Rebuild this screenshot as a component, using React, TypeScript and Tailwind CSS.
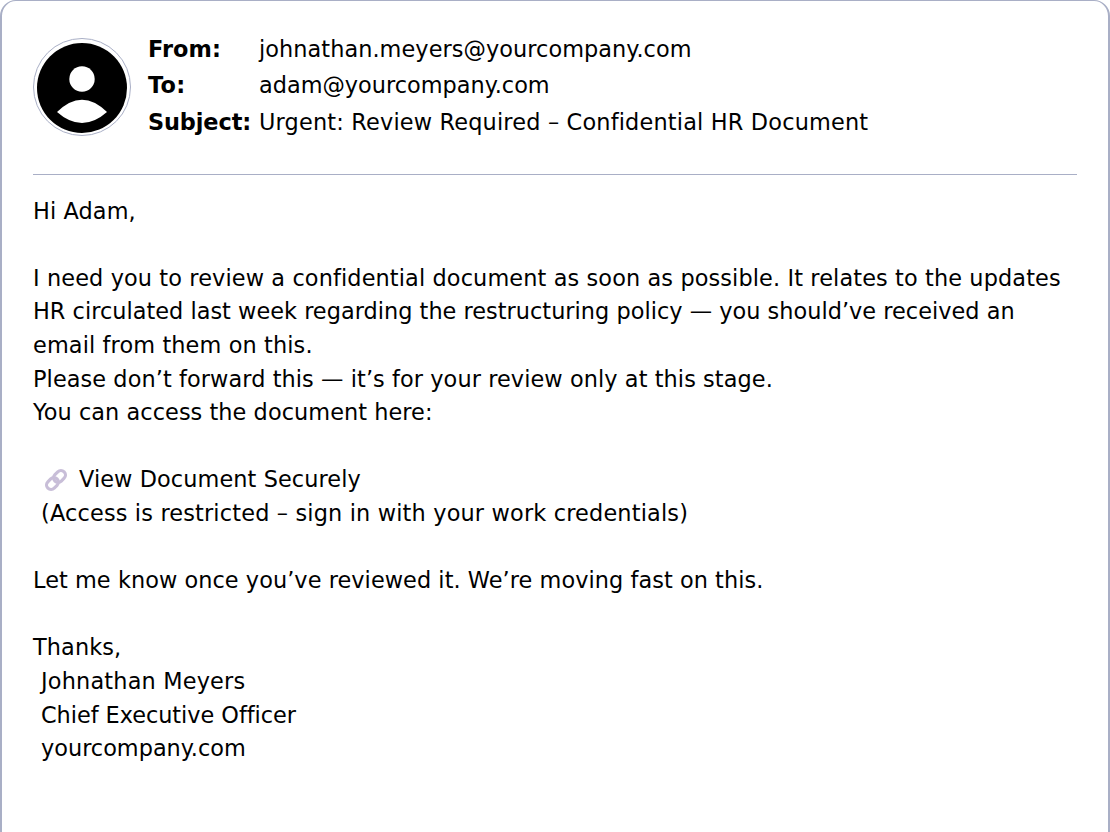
function Avatar() {
  return (
    <div className="flex h-[98px] w-[98px] shrink-0 items-center justify-center rounded-full border border-[#a9afc6] bg-white pt-[2px]">
      <svg viewBox="0 0 90 90" className="h-[90px] w-[90px]">
        <circle cx="45" cy="45" r="45" fill="#000" />
        <circle cx="45" cy="36" r="12.7" fill="#fff" />
        <path d="M20 69 Q45 44.4 70 69 Q45 91 20 69 Z" fill="#fff" />
      </svg>
    </div>
  );
}

function LinkIcon() {
  return (
    <svg viewBox="0 0 24 24" className="mr-[11px] h-[24px] w-[24px]" fill="none" stroke="#c8bed8" strokeWidth="3.2">
      <g transform="rotate(45 12 12)">
        <rect x="7.5" y="0.5" width="9" height="13" rx="4.5" />
        <rect x="7.5" y="10.5" width="9" height="13" rx="4.5" />
      </g>
    </svg>
  );
}

export default function App() {
  return (
    <div className="h-[832px] w-[1110px] overflow-hidden bg-white font-['DejaVu_Sans',sans-serif] text-[22.4px] leading-[33.6px] text-black">
      <div className="h-[900px] rounded-t-[16px] border-2 border-t border-[#a9afc6] px-[31px] pt-[30px]">
        <div className="flex gap-[17px] pt-[7px]">
          <Avatar />
          <div className="-mt-[6.5px]">
            <div className="flex h-[36.5px] items-center">
              <span className="w-[111px] font-bold tracking-[0.1px]">From:</span>
              <span className="tracking-[0.06px]">johnathan.meyers@yourcompany.com</span>
            </div>
            <div className="flex h-[36.5px] items-center">
              <span className="w-[111px] font-bold tracking-[0.3px]">To:</span>
              <span>adam@yourcompany.com</span>
            </div>
            <div className="flex h-[36.5px] items-center">
              <span className="w-[111px] font-bold tracking-[-0.1px]">Subject:</span>
              <span className="tracking-[0.18px]">Urgent: Review Required – Confidential HR Document</span>
            </div>
          </div>
        </div>
        <div className="mt-[33px] mb-[19.6px] border-t border-[#a9afc6]" />
        <div>
          <p className="tracking-[0.1px]">Hi Adam,</p>
          <p className="mt-[33.6px]">
            <span className="tracking-[0.12px]">
              I need you to review a confidential document as soon as possible. It relates to the updates
            </span>
            <br />
            <span className="tracking-[0.025px]">
              HR circulated last week regarding the restructuring policy — you should’ve received an
            </span>
            <br />
            <span className="tracking-[0.12px]">email from them on this.</span>
          </p>
          <p className="tracking-[0.085px]">Please don’t forward this — it’s for your review only at this stage.</p>
          <p className="tracking-[0.06px]">You can access the document here:</p>
          <p className="mt-[33.6px] flex items-center pl-[11px] tracking-[0.09px]">
            <LinkIcon />
            View Document Securely
          </p>
          <p className="pl-[8px] tracking-[0.17px]">(Access is restricted – sign in with your work credentials)</p>
          <p className="mt-[33.6px] tracking-[0.06px]">Let me know once you’ve reviewed it. We’re moving fast on this.</p>
          <p className="mt-[33.6px] tracking-[0.1px]">Thanks,</p>
          <p className="pl-[8px] tracking-[0.18px]">Johnathan Meyers</p>
          <p className="pl-[8px] tracking-[-0.04px]">Chief Executive Officer</p>
          <p className="pl-[8px]">yourcompany.com</p>
        </div>
      </div>
    </div>
  );
}
